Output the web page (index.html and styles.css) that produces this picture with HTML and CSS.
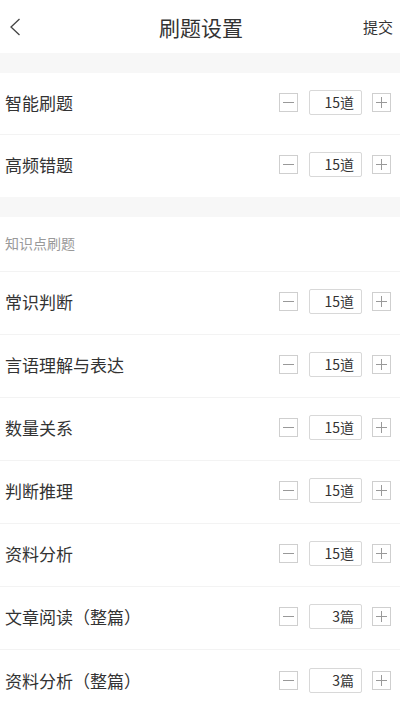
FILE: index.html
```html
<!DOCTYPE html>
<html lang="zh-CN">
<head>
    <meta charset="UTF-8">
    <title>刷题设置</title>
    <link rel="stylesheet" href="styles.css">
</head>
<body>
    <div class="header">
        <div class="back">
            <svg width="12" height="18" viewBox="0 0 12 18"><polyline points="10.5,1 2,9 10.5,17" fill="none" stroke="#444" stroke-width="1.3"/></svg>
        </div>
        <div class="title">刷题设置</div>
        <div class="submit">提交</div>
    </div>
    <div class="gap"></div>

    <div class="group">
        <div class="row">
            <span class="name">智能刷题</span>
            <div class="stepper"><span class="btn minus"></span><span class="val">15道</span><span class="btn plus"></span></div>
        </div>
        <div class="row">
            <span class="name">高频错题</span>
            <div class="stepper"><span class="btn minus"></span><span class="val">15道</span><span class="btn plus"></span></div>
        </div>
    </div>

    <div class="gap"></div>
    <div class="section">知识点刷题</div>

    <div class="group points">
        <div class="row">
            <span class="name">常识判断</span>
            <div class="stepper"><span class="btn minus"></span><span class="val">15道</span><span class="btn plus"></span></div>
        </div>
        <div class="row">
            <span class="name">言语理解与表达</span>
            <div class="stepper"><span class="btn minus"></span><span class="val">15道</span><span class="btn plus"></span></div>
        </div>
        <div class="row">
            <span class="name">数量关系</span>
            <div class="stepper"><span class="btn minus"></span><span class="val">15道</span><span class="btn plus"></span></div>
        </div>
        <div class="row">
            <span class="name">判断推理</span>
            <div class="stepper"><span class="btn minus"></span><span class="val">15道</span><span class="btn plus"></span></div>
        </div>
        <div class="row">
            <span class="name">资料分析</span>
            <div class="stepper"><span class="btn minus"></span><span class="val">15道</span><span class="btn plus"></span></div>
        </div>
        <div class="row">
            <span class="name">文章阅读（整篇）</span>
            <div class="stepper"><span class="btn minus"></span><span class="val">3篇</span><span class="btn plus"></span></div>
        </div>
        <div class="row">
            <span class="name">资料分析（整篇）</span>
            <div class="stepper"><span class="btn minus"></span><span class="val">3篇</span><span class="btn plus"></span></div>
        </div>
    </div>
</body>
</html>
```

FILE: styles.css
```css
*{
    padding: 0;
    margin: 0;
    box-sizing: border-box;
}
body{
    width: 400px;
    background: #fff;
    font-family: "Noto Sans CJK SC", "Noto Sans", sans-serif;
    color: #333;
}
.header{
    height: 53px;
    display: flex;
    align-items: center;
    justify-content: space-between;
    padding: 0 7px 0 9px;
}
.back{
    width: 40px;
    display: flex;
    align-items: center;
}
.back svg{
    display: block;
}
.title{
    font-size: 21px;
    color: #333;
}
.submit{
    width: 40px;
    text-align: right;
    font-size: 15px;
    color: #333;
}
.gap{
    height: 20px;
    background: #f7f7f7;
}
.row{
    height: 62px;
    display: flex;
    align-items: center;
    justify-content: space-between;
    padding: 0 9px 3px 5px;
    border-bottom: 1px solid #f3f3f3;
}
.points .row{
    height: 63px;
}
.row:last-child{
    border-bottom: none;
}
.name{
    font-size: 17px;
    color: #333;
}
.stepper{
    display: flex;
    align-items: center;
}
.btn{
    width: 19px;
    height: 19px;
    border: 1px solid #cfcfcf;
    background: linear-gradient(#999, #999) center / 11px 1px no-repeat;
}
.plus{
    background: linear-gradient(#999, #999) center / 11px 1px no-repeat,
                linear-gradient(#999, #999) center / 1px 11px no-repeat;
}
.val{
    width: 53px;
    height: 25px;
    margin: 0 10px 0 11px;
    border: 1px solid #d8d8d8;
    border-radius: 2px;
    font-size: 14px;
    line-height: 23px;
    text-align: right;
    padding-right: 7px;
    color: #333;
}
.section{
    height: 55px;
    display: flex;
    align-items: center;
    padding: 0 0 2px 5px;
    font-size: 14px;
    color: #999;
    border-bottom: 1px solid #f3f3f3;
}
```
